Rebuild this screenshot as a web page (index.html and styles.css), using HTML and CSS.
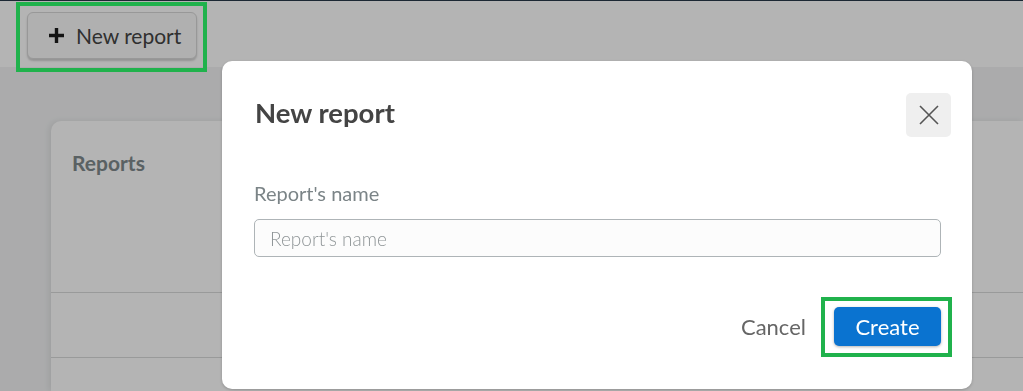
FILE: index.html
```html
<!DOCTYPE html>
<html lang="en">
<head>
<meta charset="utf-8">
<title>New report</title>
<link rel="stylesheet" href="styles.css">
</head>
<body>
  <header class="topbar">
    <button class="btn-new" type="button">
      <svg class="plus" width="17" height="17" viewBox="0 0 17 17" aria-hidden="true">
        <path d="M8.5 1v15M1 8.5h15" stroke="#1c1c1c" stroke-width="3.4" fill="none"/>
      </svg>
      <span>New report</span>
    </button>
  </header>

  <main class="main">
    <section class="card">
      <div class="card-head">
        <h2 class="card-title">Reports</h2>
      </div>
      <div class="card-row"></div>
      <div class="card-row"></div>
    </section>
  </main>

  <div class="overlay"></div>

  <div class="modal" role="dialog" aria-labelledby="modal-title">
    <div class="modal-head">
      <h1 id="modal-title" class="modal-title">New report</h1>
      <button class="close" type="button" aria-label="Close">
        <svg width="22" height="22" viewBox="0 0 22 22" aria-hidden="true">
          <path d="M2 2L20 20M20 2L2 20" stroke="#555" stroke-width="1.6" fill="none"/>
        </svg>
      </button>
    </div>
    <div class="modal-body">
      <label class="field-label" for="rname">Report's name</label>
      <input id="rname" class="field-input" type="text" placeholder="Report's name">
    </div>
    <div class="modal-foot">
      <button class="btn-cancel" type="button">Cancel</button>
      <button class="btn-create" type="button">Create</button>
    </div>
  </div>

  <div class="hl hl-new"></div>
  <div class="hl hl-create"></div>
</body>
</html>
```

FILE: styles.css
```css
* { box-sizing: border-box; }

html, body {
  margin: 0;
  padding: 0;
  height: 100%;
  overflow: hidden;
}

body {
  background: #f2f3f4;
  font-family: Lato, "Open Sans", "Liberation Sans", sans-serif;
  color: #333;
}

.topbar {
  height: 67px;
  background: #ffffff;
  border-top: 1px solid #28394a;
  padding: 11px 0 0 27px;
}

.btn-new {
  display: inline-flex;
  align-items: center;
  gap: 11px;
  height: 47px;
  padding: 0 15px 0 20px;
  background: #fafafa;
  border: 1px solid #d8d8d8;
  border-radius: 6px;
  box-shadow: 0 2px 2px rgba(0, 0, 0, 0.18);
  font-family: inherit;
  font-size: 21px;
  color: #444;
}

.plus { display: block; }

.main {
  padding: 54px 0 0 51px;
}

.card {
  background: #fff;
  border-radius: 10px 0 0 0;
  box-shadow: -2px 0 6px rgba(0, 0, 0, 0.08);
  height: 270px;
}

.card-head {
  height: 172px;
  padding: 29px 21px 0 21px;
  border-bottom: 1px solid #d9dadb;
}

.card-title {
  margin: 0;
  font-size: 21px;
  font-weight: 700;
  color: #808a8d;
}

.card-row {
  height: 65px;
  border-bottom: 1px solid #d9dadb;
}

.overlay {
  position: fixed;
  inset: 0;
  background: rgba(0, 0, 0, 0.295);
}

.modal {
  position: absolute;
  left: 222px;
  top: 61px;
  width: 750px;
  height: 328px;
  background: #fff;
  border-radius: 10px;
  box-shadow: 0 1px 3px rgba(0, 0, 0, 0.2);
  display: flex;
  flex-direction: column;
}

.modal-head {
  display: flex;
  justify-content: space-between;
  align-items: center;
  padding: 32px 21px 0 33px;
}

.modal-title {
  margin: 0 0 6px 0;
  font-size: 27.5px;
  font-weight: 700;
  color: #444;
}

.close {
  width: 45px;
  height: 44px;
  border: none;
  border-radius: 5px;
  background: #efefef;
  display: flex;
  align-items: center;
  justify-content: center;
  padding: 0;
}

.modal-body {
  padding: 44px 31px 0 32px;
  display: flex;
  flex-direction: column;
}

.field-label {
  font-size: 20px;
  color: #7b8487;
  line-height: 24px;
}

.field-input {
  margin-top: 14px;
  height: 38px;
  width: 100%;
  border: 1px solid #aeb4b7;
  border-radius: 5px;
  background: #fcfcfc;
  padding: 0 15px;
  font-family: inherit;
  font-size: 19px;
  font-weight: 300;
  color: #333;
}

.field-input::placeholder {
  color: #8f9597;
  font-weight: 300;
}

.modal-foot {
  display: flex;
  justify-content: flex-end;
  align-items: center;
  gap: 28px;
  padding: 50px 31px 0 0;
}

.btn-cancel {
  border: none;
  background: none;
  padding: 0;
  font-family: inherit;
  font-size: 22px;
  color: #666;
}

.btn-create {
  width: 107px;
  height: 39px;
  border: none;
  border-radius: 5px;
  background: #0a73d0;
  box-shadow: 0 1px 3px rgba(0, 0, 0, 0.3);
  font-family: inherit;
  font-size: 22px;
  color: #fff;
}

.hl {
  position: absolute;
  border: 4px solid #20b24c;
}

.hl-new {
  left: 16px;
  top: 2px;
  width: 191px;
  height: 70px;
}

.hl-create {
  left: 821px;
  top: 297px;
  width: 131px;
  height: 60px;
}
```
